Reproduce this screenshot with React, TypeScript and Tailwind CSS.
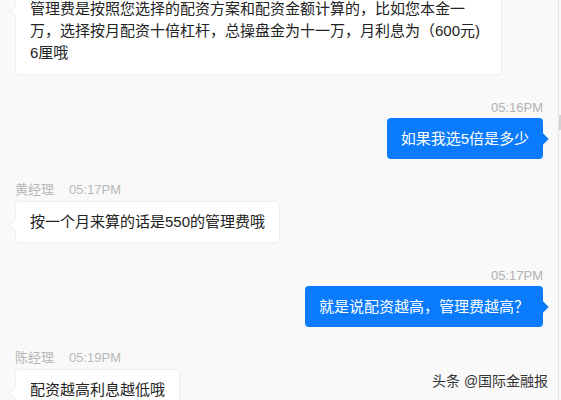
import { Fragment } from "react";

const font = "font-['Liberation_Sans','Noto_Sans_CJK_SC',sans-serif]";

const TimeRow = ({ time }: { time: string }) => {
    return (
        <div className="flex justify-end h-[18px] mb-[1px] pr-[15px] text-[13px] leading-[18px] text-[#b2b2b2]">
            {time}
        </div>
    );
};

const NameRow = ({ name, time }: { name: string; time: string }) => {
    return (
        <div className="flex items-center gap-[15px] h-[18px] mb-[2px] pl-[15px] text-[13px] leading-[18px] text-[#b8b8b8]">
            <span>{name}</span>
            <span>{time}</span>
        </div>
    );
};

const LeftBubble = ({ children, className = "" }: { children: React.ReactNode; className?: string }) => {
    return (
        <div className={`relative ml-[15px] self-start bg-white border border-[#efefef] rounded-[4px] px-[14px] py-[9px] text-[15px] leading-[22px] text-[#222] whitespace-nowrap ${className}`}>
            <span className="absolute -left-[5px] top-[19px] w-[8px] h-[8px] bg-white border-l border-b border-[#efefef] rotate-45" />
            {children}
        </div>
    );
};

const RightBubble = ({ children }: { children: React.ReactNode }) => {
    return (
        <div className="relative mr-[15px] self-end bg-[#0b7bfe] rounded-[4px] px-[14px] py-[10px] text-[15px] leading-[21px] text-white whitespace-nowrap">
            <span className="absolute -right-[4px] top-[17px] w-[8px] h-[8px] bg-[#0b7bfe] rotate-45" />
            {children}
        </div>
    );
};

const App = () => {
    return (
        <div className={`relative w-[561px] h-[400px] overflow-hidden bg-[#f9f9f9] flex ${font}`}>
            <div className="flex-1 flex flex-col">
                <div className="-mt-[13px]">
                    <LeftBubble className="w-[487px] py-[10px]">
                        <div>管理费是按照您选择的配资方案和配资金额计算的，比如您本金一</div>
                        <div>万，选择按月配资十倍杠杆，总操盘金为十一万，月利息为（600元)</div>
                        <div>6厘哦</div>
                    </LeftBubble>
                </div>
                <div className="flex flex-col mt-[24px]">
                    <TimeRow time="05:16PM" />
                    <RightBubble>如果我选5倍是多少</RightBubble>
                </div>
                <div className="flex flex-col mt-[22px]">
                    <NameRow name="黄经理" time="05:17PM" />
                    <LeftBubble>按一个月来算的话是550的管理费哦</LeftBubble>
                </div>
                <div className="flex flex-col mt-[24px]">
                    <TimeRow time="05:17PM" />
                    <RightBubble>就是说配资越高，管理费越高？</RightBubble>
                </div>
                <div className="flex flex-col mt-[22px]">
                    <NameRow name="陈经理" time="05:19PM" />
                    <LeftBubble>配资越高利息越低哦</LeftBubble>
                </div>
            </div>
            <div className="relative w-[3px] border-l border-[#e4e4e4] bg-[#f9f9f9]">
                <div className="absolute left-0 top-[115px] w-[2px] h-[15px] bg-[#d4d4d4]" />
            </div>
            <div className="absolute left-[432px] top-[372px] text-[14px] leading-[18px] text-[#333] [text-shadow:0_0_2px_#fff]">
                头条 @国际金融报
            </div>
        </div>
    );
};

export default App;
